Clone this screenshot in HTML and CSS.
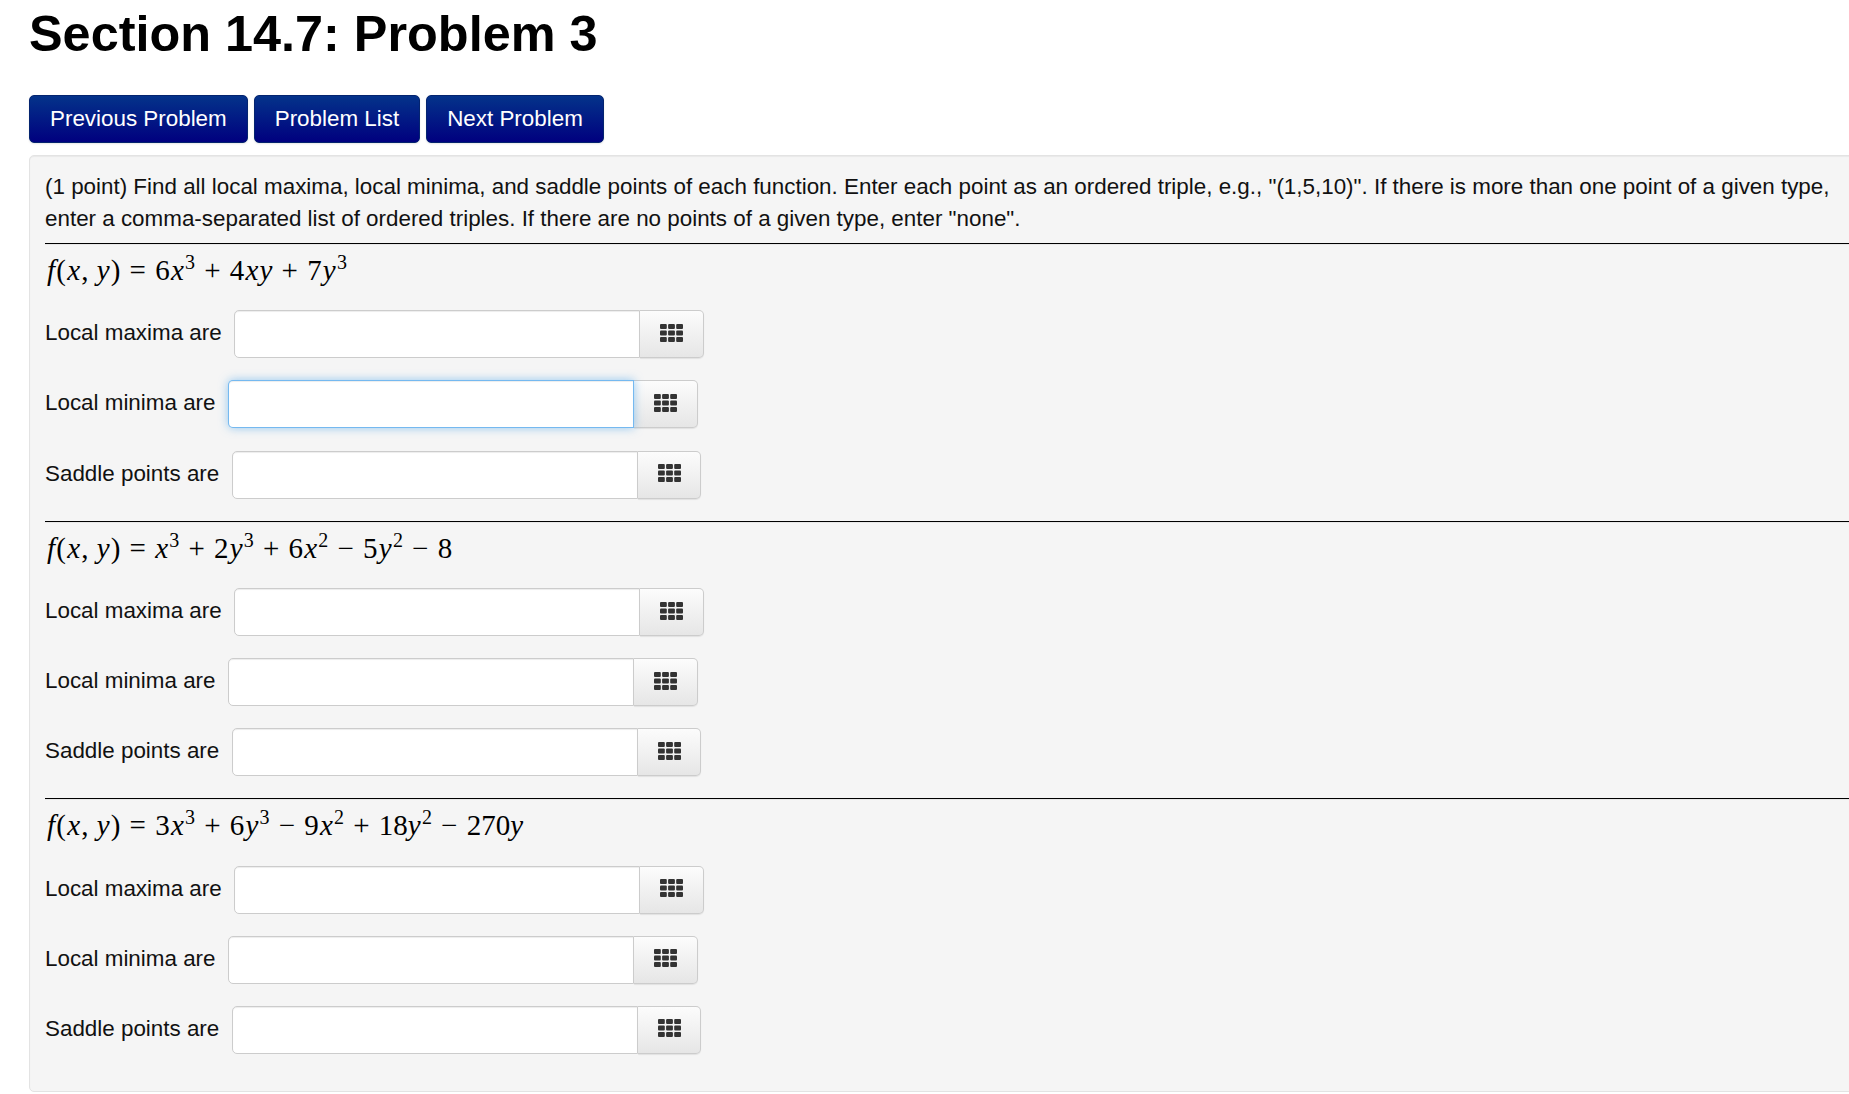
FILE: index.html
```html
<!DOCTYPE html>
<html lang="en">
<head>
    <meta charset="UTF-8">
    <title>Section 14.7: Problem 3</title>
    <link rel="stylesheet" href="styles.css">
</head>
<body>

<svg class="defs" width="0" height="0">
    <symbol id="grid" viewBox="0 0 23 18">
        <rect x="0" y="0" width="6.8" height="5" rx="1"/><rect x="8.1" y="0" width="6.8" height="5" rx="1"/><rect x="16.2" y="0" width="6.8" height="5" rx="1"/>
        <rect x="0" y="6.5" width="6.8" height="5" rx="1"/><rect x="8.1" y="6.5" width="6.8" height="5" rx="1"/><rect x="16.2" y="6.5" width="6.8" height="5" rx="1"/>
        <rect x="0" y="13" width="6.8" height="5" rx="1"/><rect x="8.1" y="13" width="6.8" height="5" rx="1"/><rect x="16.2" y="13" width="6.8" height="5" rx="1"/>
    </symbol>
</svg>

<h1>Section 14.7: Problem 3</h1>

<nav class="nav-buttons">
    <a class="nav-btn" href="#">Previous Problem</a>
    <a class="nav-btn" href="#">Problem List</a>
    <a class="nav-btn" href="#">Next Problem</a>
</nav>

<div class="problem">
    <p class="intro">(1 point) Find all local maxima, local minima, and saddle points of each function. Enter each point as an ordered triple, e.g., "(1,5,10)". If there is more than one point of a given type, enter a comma-separated list of ordered triples. If there are no points of a given type, enter "none".</p>

    <hr>
    <p class="formula"><i>f</i>(<i>x</i>,&#8201;<i>y</i>)<span class="op">=</span>6<i>x</i><sup>3</sup><span class="op">+</span>4<i>xy</i><span class="op">+</span>7<i>y</i><sup>3</sup></p>
    <div class="answer"><label>Local maxima are</label><div class="field"><input type="text"><span class="addon"><svg class="icon"><use href="#grid"/></svg></span></div></div>
    <div class="answer"><label>Local minima are</label><div class="field"><input type="text" class="focused"><span class="addon"><svg class="icon"><use href="#grid"/></svg></span></div></div>
    <div class="answer"><label>Saddle points are</label><div class="field"><input type="text"><span class="addon"><svg class="icon"><use href="#grid"/></svg></span></div></div>

    <hr>
    <p class="formula"><i>f</i>(<i>x</i>,&#8201;<i>y</i>)<span class="op">=</span><i>x</i><sup>3</sup><span class="op">+</span>2<i>y</i><sup>3</sup><span class="op">+</span>6<i>x</i><sup>2</sup><span class="op">&minus;</span>5<i>y</i><sup>2</sup><span class="op">&minus;</span>8</p>
    <div class="answer"><label>Local maxima are</label><div class="field"><input type="text"><span class="addon"><svg class="icon"><use href="#grid"/></svg></span></div></div>
    <div class="answer"><label>Local minima are</label><div class="field"><input type="text"><span class="addon"><svg class="icon"><use href="#grid"/></svg></span></div></div>
    <div class="answer"><label>Saddle points are</label><div class="field"><input type="text"><span class="addon"><svg class="icon"><use href="#grid"/></svg></span></div></div>

    <hr>
    <p class="formula"><i>f</i>(<i>x</i>,&#8201;<i>y</i>)<span class="op">=</span>3<i>x</i><sup>3</sup><span class="op">+</span>6<i>y</i><sup>3</sup><span class="op">&minus;</span>9<i>x</i><sup>2</sup><span class="op">+</span><span class="num">18</span><i>y</i><sup>2</sup><span class="op">&minus;</span><span class="num">270</span><i>y</i></p>
    <div class="answer"><label>Local maxima are</label><div class="field"><input type="text"><span class="addon"><svg class="icon"><use href="#grid"/></svg></span></div></div>
    <div class="answer"><label>Local minima are</label><div class="field"><input type="text"><span class="addon"><svg class="icon"><use href="#grid"/></svg></span></div></div>
    <div class="answer"><label>Saddle points are</label><div class="field"><input type="text"><span class="addon"><svg class="icon"><use href="#grid"/></svg></span></div></div>
</div>

</body>
</html>
```

FILE: styles.css
```css
html, body {
    overflow: hidden;
}

body {
    font-family: "Liberation Sans", Arial, sans-serif;
    font-size: 22.4px;
    line-height: 32px;
    color: #111;
    background: white;
    margin: 0;
    padding: 0 0 0 29px;
    height: 1094px;
}

.defs {
    position: absolute;
}

h1 {
    font-size: 50.4px;
    line-height: 64px;
    font-weight: bold;
    color: #000;
    margin: 2px 0 29px 0;
}

.nav-buttons {
    display: flex;
    gap: 6px;
}

.nav-btn {
    display: block;
    height: 48px;
    box-sizing: border-box;
    padding: 7px 20px;
    color: white;
    text-decoration: none;
    white-space: nowrap;
    background: linear-gradient(to bottom, #04338a, #00007f);
    border: 1px solid #04246f;
    border-radius: 5px;
    box-shadow: 0 1px 2px rgba(0,0,0,0.1);
}

.problem {
    width: 1860px;
    margin-top: 12px;
    padding: 15px;
    padding-bottom: 15.2px;
    background: #f5f5f5;
    border: 1px solid #e3e3e3;
    border-radius: 5px;
    box-shadow: inset 0 1px 1px rgba(0,0,0,0.05);
}

.intro {
    width: 1800px;
    margin: 0 0 8px 0;
}

hr {
    height: 0;
    border: none;
    border-top: 1px solid #000;
    border-bottom: 1px solid #e8e8e8;
    margin: 0;
}

.formula {
    font-family: "Liberation Serif", "Times New Roman", serif;
    font-size: 29px;
    letter-spacing: 1.2px;
    line-height: 32px;
    height: 65.4px;
    margin: 0;
    padding: 9px 0 0 2px;
    box-sizing: border-box;
    color: #000;
    white-space: nowrap;
}

.formula sup {
    font-size: 20px;
    line-height: 0;
}

.formula .op {
    margin: 0 8px;
}

.formula .num {
    letter-spacing: 0;
}

.answer {
    display: flex;
    align-items: center;
    gap: 12.5px;
    height: 48px;
    margin-bottom: 22.1px;
}

.answer label {
    white-space: nowrap;
    padding-bottom: 2px;
}

.field {
    display: flex;
    height: 48px;
}

.field input {
    width: 406px;
    height: 48px;
    box-sizing: border-box;
    background: white;
    border: 1.33px solid #ccc;
    border-radius: 5px 0 0 5px;
    box-shadow: inset 0 1px 1px rgba(0,0,0,0.075);
    outline: none;
    padding: 0 8px;
    position: relative;
}

.field input.focused {
    border-color: rgba(82,168,236,0.8);
    box-shadow: inset 0 1px 1px rgba(0,0,0,0.075), 0 0 10px rgba(82,168,236,0.6);
}

.addon {
    width: 63.5px;
    box-sizing: border-box;
    display: flex;
    align-items: center;
    justify-content: center;
    padding-bottom: 3px;
    background: linear-gradient(to bottom, #fcfcfc, #e6e6e6);
    border: 1.33px solid #ccc;
    border-left: none;
    border-radius: 0 5px 5px 0;
    box-shadow: 0 1px 1px rgba(0,0,0,0.08);
}

.icon {
    width: 23px;
    height: 18px;
    fill: #333;
}
```
